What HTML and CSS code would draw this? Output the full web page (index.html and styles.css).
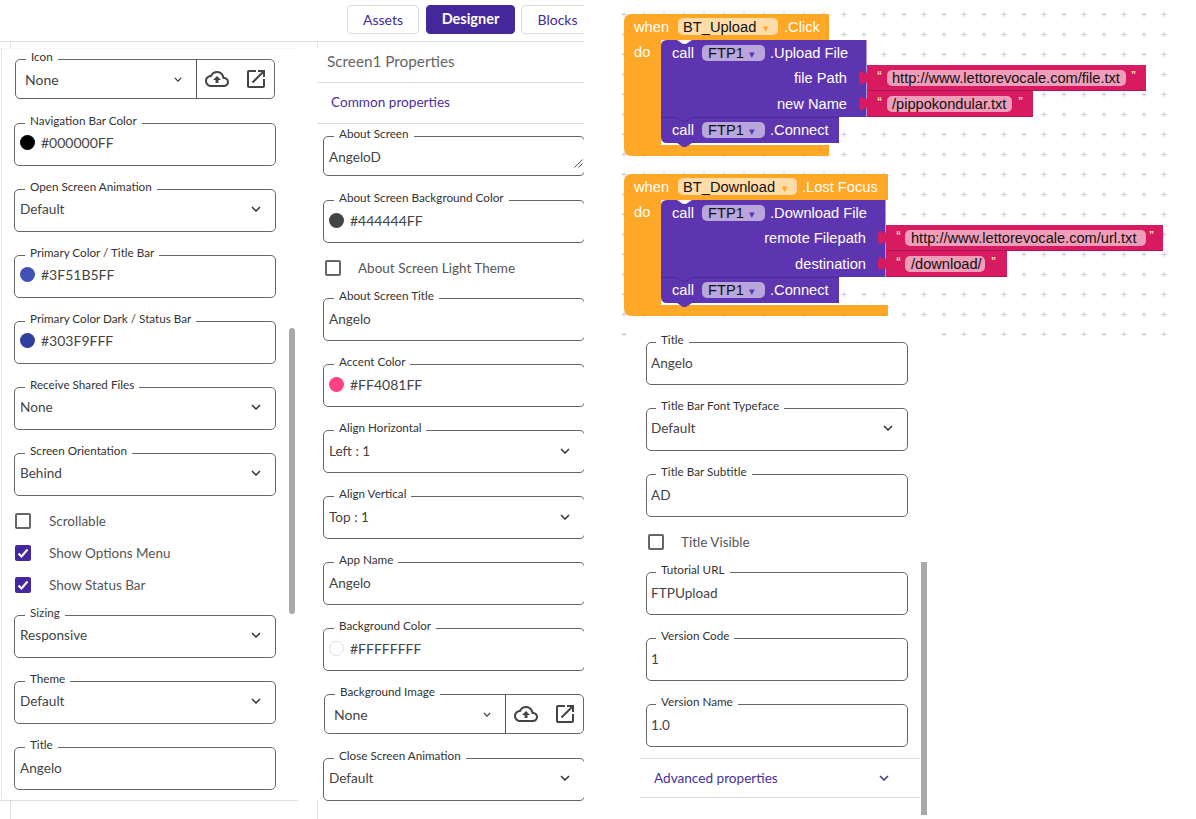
FILE: index.html
```html
<!DOCTYPE html>
<html lang="en">
<head>
<meta charset="utf-8">
<title>Screen1 Properties</title>
<link rel="stylesheet" href="styles.css">
</head>
<body>
<svg class="defs" width="0" height="0" aria-hidden="true">
  <symbol id="chev" viewBox="0 0 10 6"><path d="M1 1l4 4 4-4" fill="none" stroke="currentColor" stroke-width="1.5"/></symbol>
  <symbol id="cloud" viewBox="0 0 24 24"><path d="M19.35 10.04C18.67 6.59 15.64 4 12 4 9.11 4 6.6 5.64 5.35 8.04 2.34 8.36 0 10.91 0 14c0 3.31 2.69 6 6 6h13c2.76 0 5-2.24 5-5 0-2.64-2.05-4.78-4.65-4.96zM19 18H6c-2.21 0-4-1.79-4-4 0-2.05 1.53-3.76 3.56-3.97l1.07-.11.5-.95C8.08 7.14 9.94 6 12 6c2.62 0 4.88 1.86 5.39 4.43l.3 1.5 1.53.11c1.56.1 2.78 1.41 2.78 2.96 0 1.65-1.35 3-3 3zM8 13h2.55v3h2.9v-3H16l-4-4z"/></symbol>
  <symbol id="open" viewBox="0 0 24 24"><path d="M19 19H5V5h7V3H5c-1.11 0-2 .9-2 2v14c0 1.1.89 2 2 2h14c1.1 0 2-.9 2-2v-7h-2v7zM14 3v2h3.59l-9.83 9.83 1.41 1.41L19 6.41V10h2V3h-7z"/></symbol>
  <symbol id="tick" viewBox="0 0 16 16"><path d="M3.500 8.500l3 3 6-7" fill="none" stroke="#fff" stroke-width="2"/></symbol>
</svg>

<div class="page">
  <div class="editor">
    <header class="tabs">
      <button class="tab">Assets</button>
      <button class="tab tab-on">Designer</button>
      <button class="tab tab-cut">Blocks</button>
    </header>
    <div class="columns">
      <section class="col col-left">
        <span class="tick tick-top"></span>
        <fieldset class="field file"><legend>Icon</legend>
          <div class="file-row">
            <div class="val file-val">None<svg class="chev chev-sm"><use href="#chev"/></svg></div>
            <div class="file-btns"><svg class="ico"><use href="#cloud"/></svg><svg class="ico"><use href="#open"/></svg></div>
          </div>
        </fieldset>
        <fieldset class="field"><legend>Navigation Bar Color</legend><div class="val hex"><i class="dot c-000"></i>#000000FF</div></fieldset>
        <fieldset class="field"><legend>Open Screen Animation</legend><div class="val sel">Default<svg class="chev"><use href="#chev"/></svg></div></fieldset>
        <fieldset class="field"><legend>Primary Color / Title Bar</legend><div class="val hex"><i class="dot c-3f5"></i>#3F51B5FF</div></fieldset>
        <fieldset class="field"><legend>Primary Color Dark / Status Bar</legend><div class="val hex"><i class="dot c-303"></i>#303F9FFF</div></fieldset>
        <fieldset class="field"><legend>Receive Shared Files</legend><div class="val sel">None<svg class="chev"><use href="#chev"/></svg></div></fieldset>
        <fieldset class="field"><legend>Screen Orientation</legend><div class="val sel">Behind<svg class="chev"><use href="#chev"/></svg></div></fieldset>
        <div class="checks">
          <label class="check"><span class="box"></span>Scrollable</label>
          <label class="check"><span class="box box-on"><svg><use href="#tick"/></svg></span>Show Options Menu</label>
          <label class="check"><span class="box box-on"><svg><use href="#tick"/></svg></span>Show Status Bar</label>
        </div>
        <fieldset class="field"><legend>Sizing</legend><div class="val sel">Responsive<svg class="chev"><use href="#chev"/></svg></div></fieldset>
        <fieldset class="field"><legend>Theme</legend><div class="val sel">Default<svg class="chev"><use href="#chev"/></svg></div></fieldset>
        <fieldset class="field"><legend>Title</legend><div class="val">Angelo</div></fieldset>
        <span class="scroll scroll-left"></span>
        <span class="foot-line"></span>
        <span class="tick tick-bottom"></span>
      </section>

      <section class="col col-mid">
        <span class="tick tick-mid-top"></span>
        <h2 class="title">Screen1 Properties</h2>
        <h3 class="common">Common properties</h3>
        <div class="mid-fields">
          <fieldset class="field area"><legend>About Screen</legend><div class="val area-val">AngeloD<svg class="grip" viewBox="0 0 9 9"><path d="M0.500 8.500l8-8M4.500 8.500l4-4" stroke="#555" fill="none"/></svg></div></fieldset>
          <fieldset class="field"><legend>About Screen Background Color</legend><div class="val hex"><i class="dot c-444"></i>#444444FF</div></fieldset>
          <div class="checks checks-mid"><label class="check"><span class="box"></span>About Screen Light Theme</label></div>
          <fieldset class="field"><legend>About Screen Title</legend><div class="val">Angelo</div></fieldset>
          <fieldset class="field"><legend>Accent Color</legend><div class="val hex"><i class="dot c-ff4"></i>#FF4081FF</div></fieldset>
          <fieldset class="field"><legend>Align Horizontal</legend><div class="val sel sel-low">Left : 1<svg class="chev"><use href="#chev"/></svg></div></fieldset>
          <fieldset class="field"><legend>Align Vertical</legend><div class="val sel sel-low">Top : 1<svg class="chev"><use href="#chev"/></svg></div></fieldset>
          <fieldset class="field"><legend>App Name</legend><div class="val">Angelo</div></fieldset>
          <fieldset class="field"><legend>Background Color</legend><div class="val hex"><i class="dot c-fff"></i>#FFFFFFFF</div></fieldset>
          <fieldset class="field file"><legend>Background Image</legend>
            <div class="file-row">
              <div class="val file-val">None<svg class="chev chev-sm"><use href="#chev"/></svg></div>
              <div class="file-btns"><svg class="ico"><use href="#cloud"/></svg><svg class="ico"><use href="#open"/></svg></div>
            </div>
          </fieldset>
          <fieldset class="field"><legend>Close Screen Animation</legend><div class="val sel">Default<svg class="chev"><use href="#chev"/></svg></div></fieldset>
        </div>
        <span class="tick tick-mid-bottom"></span>
      </section>
    </div>
  </div>

  <div class="right">
    <svg class="workspace" viewBox="585 0 611 336" width="611" height="336">
      <defs>
        <pattern id="grid" x="614" y="4" width="20" height="20" patternUnits="userSpaceOnUse">
          <path d="M7.500 10.500h5M10 8v5" stroke="#ccc"/>
        </pattern>
      </defs>
      <rect class="gridfill" x="620" y="8" width="548" height="322"/>
      <rect class="gridfill" x="620" y="330" width="8" height="6"/>
      <rect class="gridfill" x="940" y="330" width="228" height="6"/>

      <!-- stack 1 -->
      <path class="b-orange" d="M632 14H829V40H661V145H829V156H632q-8 0-8-8V22q0-8 8-8z"/>
      <path class="b-pink" d="M867 65H1146V91H867z"/>
      <path class="b-pink" d="M867 91H1033V117H867z"/>
      <path class="b-purple" d="M667 40H677l6 4h3l6-4H866.500V117H839V143H692l-6 4h-3l-6-4H667q-6 0-6-6V46q0-6 6-6z"/>
      <path class="b-pink" d="M867 70c0 10-8-8-8 7.500s8-2.500 8 7.500z"/>
      <path class="b-pink" d="M867 96c0 10-8-8-8 7.500s8-2.500 8 7.500z"/>
      <path class="b-seam" d="M661 117.500H677l6 4h3l6-4H839"/>
      <path class="p-seam" d="M867 90.500H1146M867 116.500H1033"/>

      <text class="t-w" x="634" y="32">when</text>
      <rect class="f-orange" x="678" y="18" width="100" height="17" rx="5"/>
      <text class="t-d" x="683" y="32">BT_Upload</text>
      <text class="t-arrow" x="763" y="32">▾</text>
      <text class="t-w" x="784" y="32">.Click</text>
      <text class="t-w" x="634" y="57">do</text>

      <text class="t-w" x="672" y="58">call</text>
      <rect class="f-purple" x="702" y="45" width="63" height="16" rx="5"/>
      <text class="t-d" x="708" y="58">FTP1</text>
      <text class="t-arrow t-arrow-p" x="749" y="58">▾</text>
      <text class="t-w" x="770" y="58">.Upload File</text>
      <text class="t-w t-end" x="847" y="83">file Path</text>
      <text class="t-w t-end" x="847" y="109">new Name</text>

      <text class="t-q" x="877" y="79">“</text>
      <rect class="f-pink" x="887" y="70" width="239" height="16" rx="5"/>
      <text class="t-d t-s" x="892" y="83">http://www.lettorevocale.com/file.txt</text>
      <text class="t-q" x="1131" y="79">”</text>
      <text class="t-q" x="877" y="105">“</text>
      <rect class="f-pink" x="887" y="96" width="125" height="16" rx="5"/>
      <text class="t-d t-s" x="892" y="109">/pippokondular.txt</text>
      <text class="t-q" x="1018" y="105">”</text>

      <text class="t-w" x="672" y="135">call</text>
      <rect class="f-purple" x="702" y="122" width="63" height="16" rx="5"/>
      <text class="t-d" x="708" y="135">FTP1</text>
      <text class="t-arrow t-arrow-p" x="749" y="135">▾</text>
      <text class="t-w" x="770" y="135">.Connect</text>

      <!-- stack 2 -->
      <path class="b-orange" d="M632 174H888V200H661V305H888V316H632q-8 0-8-8V182q0-8 8-8z"/>
      <path class="b-pink" d="M886 225H1163V251H886z"/>
      <path class="b-pink" d="M886 251H1007V277H886z"/>
      <path class="b-purple" d="M667 200H677l6 4h3l6-4H885.500V277H839V303H692l-6 4h-3l-6-4H667q-6 0-6-6V206q0-6 6-6z"/>
      <path class="b-pink" d="M886 230c0 10-8-8-8 7.500s8-2.500 8 7.500z"/>
      <path class="b-pink" d="M886 256c0 10-8-8-8 7.500s8-2.500 8 7.500z"/>
      <path class="b-seam" d="M661 277.500H677l6 4h3l6-4H839"/>
      <path class="p-seam" d="M886 250.500H1163M886 276.500H1007"/>

      <text class="t-w" x="634" y="192">when</text>
      <rect class="f-orange" x="678" y="178" width="119" height="17" rx="5"/>
      <text class="t-d" x="683" y="192">BT_Download</text>
      <text class="t-arrow" x="782" y="192">▾</text>
      <text class="t-w" x="802" y="192">.Lost Focus</text>
      <text class="t-w" x="634" y="217">do</text>

      <text class="t-w" x="672" y="218">call</text>
      <rect class="f-purple" x="702" y="205" width="63" height="16" rx="5"/>
      <text class="t-d" x="708" y="218">FTP1</text>
      <text class="t-arrow t-arrow-p" x="749" y="218">▾</text>
      <text class="t-w" x="770" y="218">.Download File</text>
      <text class="t-w t-end" x="866" y="243">remote Filepath</text>
      <text class="t-w t-end" x="866" y="269">destination</text>

      <text class="t-q" x="896" y="239">“</text>
      <rect class="f-pink" x="905" y="230" width="241" height="16" rx="5"/>
      <text class="t-d t-s" x="911" y="243">http://www.lettorevocale.com/url.txt</text>
      <text class="t-q" x="1149" y="239">”</text>
      <text class="t-q" x="896" y="265">“</text>
      <rect class="f-pink" x="905" y="256" width="80" height="16" rx="5"/>
      <text class="t-d t-s" x="911" y="269">/download/</text>
      <text class="t-q" x="991" y="265">”</text>

      <text class="t-w" x="672" y="295">call</text>
      <rect class="f-purple" x="702" y="282" width="63" height="16" rx="5"/>
      <text class="t-d" x="708" y="295">FTP1</text>
      <text class="t-arrow t-arrow-p" x="749" y="295">▾</text>
      <text class="t-w" x="770" y="295">.Connect</text>
    </svg>

    <div class="form">
      <fieldset class="field"><legend>Title</legend><div class="val">Angelo</div></fieldset>
      <fieldset class="field"><legend>Title Bar Font Typeface</legend><div class="val sel">Default<svg class="chev"><use href="#chev"/></svg></div></fieldset>
      <fieldset class="field"><legend>Title Bar Subtitle</legend><div class="val">AD</div></fieldset>
      <div class="checks checks-mid"><label class="check"><span class="box"></span>Title Visible</label></div>
      <fieldset class="field"><legend>Tutorial URL</legend><div class="val">FTPUpload</div></fieldset>
      <fieldset class="field"><legend>Version Code</legend><div class="val">1</div></fieldset>
      <fieldset class="field field-last"><legend>Version Name</legend><div class="val">1.0</div></fieldset>
      <div class="advanced">Advanced properties<svg class="chev"><use href="#chev"/></svg></div>
      <span class="scroll scroll-right"></span>
    </div>
  </div>
</div>
</body>
</html>
```

FILE: styles.css
```css
* { box-sizing: border-box; }
html, body { margin: 0; height: 100%; background: #fff; }
body { font-family: Lato, "Open Sans", sans-serif; color: #444; overflow: hidden; }
.defs { position: absolute; }

.page { display: grid; grid-template-columns: 585px 611px; width: 1196px; height: 819px; overflow: hidden; }

/* header tabs */
.editor { width: 585px; height: 819px; overflow: hidden; }
.tabs { display: flex; gap: 7px; height: 42px; padding: 5px 0 0 347px; border-bottom: 1px solid #ddd; margin-right: 1px; overflow: hidden; }
.tab { flex: none; height: 29px; border: 1px solid #ddd; border-radius: 4px; background: #fff; color: #44289b; font: 14px/1 Lato, sans-serif; padding: 0; width: 72px; }
.tab-on { width: 89px; background: #44289b; border-color: #44289b; color: #fff; font-weight: 700; font-size: 14.500px; }
.tab-cut { width: 73px; margin-left: -1px; }

.columns { display: grid; grid-template-columns: 317px 267px; height: 777px; }
.col { position: relative; overflow: hidden; }

/* left column */
.col-left { padding: 7px 0 0 14px; }
.col-left::before { content: ""; position: absolute; left: 1px; top: 6px; bottom: 21px; width: 1px; background: #e4e4e4; }
.col-left::after { content: ""; position: absolute; left: 2px; right: 19px; top: 6px; height: 1px; background: #f6f6f6; }
.tick { position: absolute; width: 1px; background: #e2e2e2; }
.tick-top { left: 10px; top: 0; height: 6px; }
.tick-bottom { left: 10px; top: 759px; height: 18px; }
.tick-mid-top { left: 0; top: 0; height: 6px; }
.tick-mid-bottom { left: 0; top: 758px; height: 19px; }
.foot-line { position: absolute; left: 0; width: 298px; top: 758px; height: 1px; background: #ddd; }

/* fields */
.field { display: block; width: 262px; height: 53px; margin: 0 0 13px; padding: 0; border: 1px solid #666; border-radius: 5px; min-width: 0; }
.field legend { margin-left: 10px; padding: 0 5px 7px; font-size: 11.700px; line-height: 14px; color: #333; white-space: nowrap; }
.val { display: flex; align-items: center; height: 20px; padding-left: 5px; font-size: 13.600px; color: #444; }
.hex { height: 18px; font-size: 14px; }
.col-left .hex { height: 17px; }
.sel { height: 18px; justify-content: space-between; padding-right: 14px; }
.sel-low { height: 20px; }
.dot { flex: none; width: 15px; height: 15px; margin-right: 6px; border-radius: 50%; }
.c-000 { background: #000; }
.c-444 { background: #444; }
.c-3f5 { background: #3f51b5; }
.c-303 { background: #303f9f; }
.c-ff4 { background: #ff4081; }
.c-fff { background: #fff; border: 1px solid #ddd; }
.chev { flex: none; width: 10px; height: 6px; color: #333; }
.chev-sm { width: 8px; height: 5px; }

.file { width: 260px; height: 50px; margin: 0 1px 14px; }
.file-row { display: flex; align-items: flex-start; }
.file-val { width: 180px; height: 18px; padding: 0 14px 0 9px; justify-content: space-between; font-size: 14px; }
.file-btns { display: flex; align-items: center; gap: 15px; height: 40px; margin-top: -11px; padding-left: 8px; border-left: 1px solid #555; }
.ico { width: 24px; height: 24px; fill: #444; }

.area { height: 50px; margin-bottom: 14px; }
.area-val { justify-content: space-between; height: 20px; padding-right: 0; }
.grip { width: 9px; height: 9px; align-self: flex-end; margin: 0 1px -1px 0; }

/* checkboxes */
.checks { margin: -4px 0 4px 1px; }
.checks-mid { margin-left: 2px; }
.checks-mid .check { gap: 17px; }
.check { display: flex; align-items: center; gap: 18px; height: 32px; font-size: 13.500px; color: #555; }
.box { flex: none; width: 16px; height: 16px; border: 2px solid #666; border-radius: 2px; }
.box-on { border: 0; background: #44289b; }
.box-on svg { display: block; width: 16px; height: 16px; }

/* middle column */
.col-mid { padding: 0; }
.title { margin: 0; height: 41px; padding: 0 0 0 10px; border-bottom: 1px solid #ddd; font-size: 15.300px; font-weight: 400; line-height: 38px; color: #666; }
.common { margin: 0; height: 41px; padding: 0 0 0 14px; border-bottom: 1px solid #ddd; font-size: 13.600px; font-weight: 400; line-height: 38px; color: #4a2f9e; }
.mid-fields { padding: 2px 0 0 6px; }

/* scrollbars */
.scroll { position: absolute; width: 6px; background: #a9a9a9; }
.scroll-left { left: 289px; top: 286px; height: 286px; border-radius: 3px; }
.scroll-right { left: 336px; top: 230px; height: 253px; }

/* right side */
.right { width: 611px; height: 819px; overflow: hidden; }
.workspace { display: block; }
.gridfill { fill: url(#grid); }
.form { position: relative; width: 343px; height: 487px; margin-top: -4px; padding-left: 61px; }
.form legend { margin-left: 9px; }
.form .val { padding-left: 4px; }
.field-last { margin-bottom: 11px; }
.advanced { display: flex; align-items: center; justify-content: space-between; width: 280px; height: 40px; margin-left: -6px; padding: 0 31px 0 14px; border-top: 1px solid #ddd; border-bottom: 1px solid #ddd; font-size: 13.600px; color: #4a2f9e; }
.advanced .chev { color: #4a2f9e; }

/* blocks */
.b-orange { fill: #ffa726; }
.b-purple { fill: #5e35b1; }
.b-pink { fill: #d81b60; }
.b-seam { fill: none; stroke: #4a2a92; }
.p-seam { fill: none; stroke: #b01450; }
.f-orange { fill: #ffdca8; }
.f-purple { fill: #b9a6dc; }
.f-pink { fill: #ef9db9; }
.workspace text { font-family: "Liberation Sans", Arial, sans-serif; font-size: 14.670px; }
.t-w { fill: #fff; }
.t-end { text-anchor: end; }
.t-d { fill: #111; }
.workspace .t-s { font-size: 14.600px; }
.workspace .t-arrow { fill: #ffa726; font-size: 11px; }
.workspace .t-arrow-p { fill: #5e35b1; }
.workspace .t-q { fill: #ffe9b5; font-size: 10px; font-weight: 700; }
```
